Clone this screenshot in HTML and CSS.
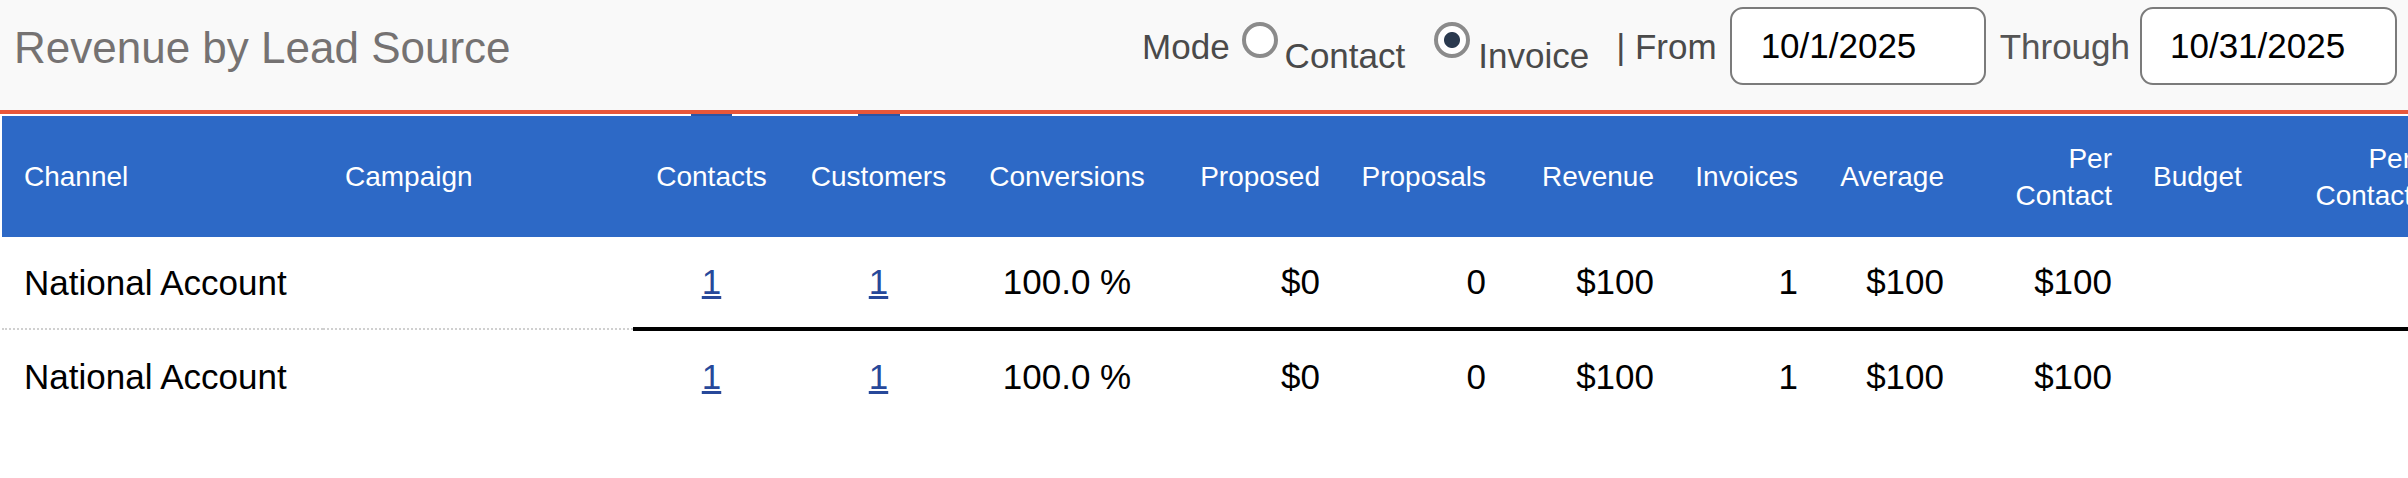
FILE: index.html
```html
<!DOCTYPE html>
<html lang="en">
<head>
<meta charset="utf-8">
<title>Revenue by Lead Source</title>
<link rel="stylesheet" href="styles.css">
</head>
<body>
<div class="page">
  <header class="topbar">
    <h1 class="title">Revenue by Lead Source</h1>
    <div class="controls">
      <span class="lbl mode">Mode</span>
      <input type="radio" name="mode" class="radio r-contact" id="m-contact">
      <label for="m-contact" class="opt opt-contact">Contact</label>
      <input type="radio" name="mode" class="radio r-invoice" id="m-invoice" checked>
      <label for="m-invoice" class="opt opt-invoice">Invoice</label>
      <span class="lbl from">| From</span>
      <input class="date date-from" type="text" value="10/1/2025">
      <span class="lbl through">Through</span>
      <input class="date date-through" type="text" value="10/31/2025">
    </div>
  </header>
  <div class="rule"></div>
  <div class="peek"><span class="tab tab1"></span><span class="tab tab2"></span></div>
  <div class="tablewrap">
    <table class="report">
      <colgroup>
        <col class="w1"><col class="w2"><col class="w3"><col class="w4"><col class="w5">
        <col class="w6"><col class="w7"><col class="w8"><col class="w9"><col class="w10">
        <col class="w11"><col class="w12"><col class="w13">
      </colgroup>
      <thead>
        <tr>
          <th class="left">Channel</th>
          <th class="left">Campaign</th>
          <th class="center">Contacts</th>
          <th class="center">Customers</th>
          <th class="center">Conversions</th>
          <th class="right">Proposed</th>
          <th class="right">Proposals</th>
          <th class="right">Revenue</th>
          <th class="right">Invoices</th>
          <th class="right">Average</th>
          <th class="right">Per<br>Contact</th>
          <th class="budget">Budget</th>
          <th class="right">Per<br>Contact</th>
        </tr>
      </thead>
      <tbody>
        <tr class="row1">
          <td class="left">National Account</td>
          <td class="left"></td>
          <td class="center"><a href="#" class="lnk">1</a></td>
          <td class="center"><a href="#" class="lnk">1</a></td>
          <td class="center">100.0 %</td>
          <td class="right">$0</td>
          <td class="right">0</td>
          <td class="right">$100</td>
          <td class="right">1</td>
          <td class="right">$100</td>
          <td class="right">$100</td>
          <td class="right"></td>
          <td class="right"></td>
        </tr>
        <tr class="row2">
          <td class="left dotted">National Account</td>
          <td class="left dotted"></td>
          <td class="center solid"><a href="#" class="lnk">1</a></td>
          <td class="center solid"><a href="#" class="lnk">1</a></td>
          <td class="center solid">100.0 %</td>
          <td class="right solid">$0</td>
          <td class="right solid">0</td>
          <td class="right solid">$100</td>
          <td class="right solid">1</td>
          <td class="right solid">$100</td>
          <td class="right solid">$100</td>
          <td class="right solid"></td>
          <td class="right solid"></td>
        </tr>
      </tbody>
    </table>
  </div>
</div>
</body>
</html>
```

FILE: styles.css
```css
html, body {
  margin: 0;
  padding: 0;
  background: #ffffff;
  overflow: hidden;
}

body {
  width: 2408px;
  height: 478px;
  font-family: "Liberation Sans", Arial, sans-serif;
  color: #000;
}

.page {
  width: 2408px;
  overflow: hidden;
}

/* ---------- top bar ---------- */
.topbar {
  height: 110px;
  box-sizing: border-box;
  padding: 7px 11px 25px 14px;
  background: #f9f9f9;
  display: flex;
  align-items: center;
}

.title {
  margin: 4px 0 0 0;
  font-size: 44px;
  line-height: 44px;
  font-weight: normal;
  color: #757272;
  white-space: nowrap;
}

.controls {
  margin-left: auto;
  height: 100%;
  display: flex;
  align-items: center;
}

.lbl,
.opt {
  font-size: 35px;
  line-height: 35px;
  color: #4a4a4a;
  white-space: nowrap;
}

.mode {
  margin-right: 12px;
}

.radio {
  -webkit-appearance: none;
  appearance: none;
  width: 36px;
  height: 36px;
  box-sizing: border-box;
  margin: 0 0 12px 0;
  border: 4px solid #8b8b8b;
  border-radius: 50%;
  background: #ffffff;
  flex: none;
}

.radio:checked {
  background: radial-gradient(circle, #2b3a4f 0 7.5px, #ffffff 8.5px);
}

.opt {
  margin-top: 18px;
}

.opt-contact {
  margin-left: 7px;
  margin-right: 29px;
}

.opt-invoice {
  margin-left: 8px;
  margin-right: 27px;
}

.from {
  margin-right: 13px;
}

.through {
  margin: 0 10px 0 14px;
  color: #555555;
}

.date {
  height: 78px;
  box-sizing: border-box;
  border: 2px solid #7b7b7b;
  border-radius: 13px;
  background: #ffffff;
  padding: 0 0 0 29px;
  margin: 0;
  font-family: "Liberation Sans", Arial, sans-serif;
  font-size: 35px;
  color: #000;
  outline: none;
}

.date-from {
  width: 256px;
}

.date-through {
  width: 257px;
  padding-left: 28px;
}

/* ---------- separators ---------- */
.rule {
  height: 4px;
  background: #e8573a;
}

.peek {
  height: 2px;
  background: #ffffff;
  display: flex;
}

.tab {
  height: 2px;
  background: #2a56a6;
}

.tab1 {
  margin-left: 691px;
  width: 41px;
}

.tab2 {
  margin-left: 126px;
  width: 42px;
}

/* ---------- table ---------- */
.tablewrap {
  width: 2408px;
  overflow: hidden;
}

.report {
  margin-left: 2px;
  width: 2426px;
  table-layout: fixed;
  border-collapse: collapse;
  border-spacing: 0;
}

.w1 { width: 321px; }
.w2 { width: 310px; }
.w3 { width: 157px; }
.w4 { width: 177px; }
.w5 { width: 200px; }
.w6 { width: 169px; }
.w7 { width: 166px; }
.w8 { width: 168px; }
.w9 { width: 144px; }
.w10 { width: 146px; }
.w11 { width: 168px; }
.w12 { width: 136px; }
.w13 { width: 164px; }

.report th {
  height: 121px;
  padding: 0;
  background: #2d69c6;
  color: #ffffff;
  font-size: 28px;
  line-height: 37px;
  font-weight: normal;
  vertical-align: middle;
  white-space: nowrap;
}

.report td {
  padding: 0;
  font-size: 35px;
  line-height: 40px;
  color: #000;
  vertical-align: middle;
  white-space: nowrap;
}

.report .left {
  text-align: left;
  padding-left: 22px;
}

.report .center {
  text-align: center;
}

.report .right {
  text-align: right;
  padding-right: 16px;
}

.report .budget {
  text-align: left;
  padding-left: 25px;
}

.row1 td {
  height: 90px;
}

.row2 td {
  height: 92px;
}

.row2 .dotted {
  border-top: 2px dotted #d0d0d0;
}

.row2 .solid {
  border-top: 4px solid #000000;
}

.lnk {
  color: #27489a;
  text-decoration: underline;
}
```
